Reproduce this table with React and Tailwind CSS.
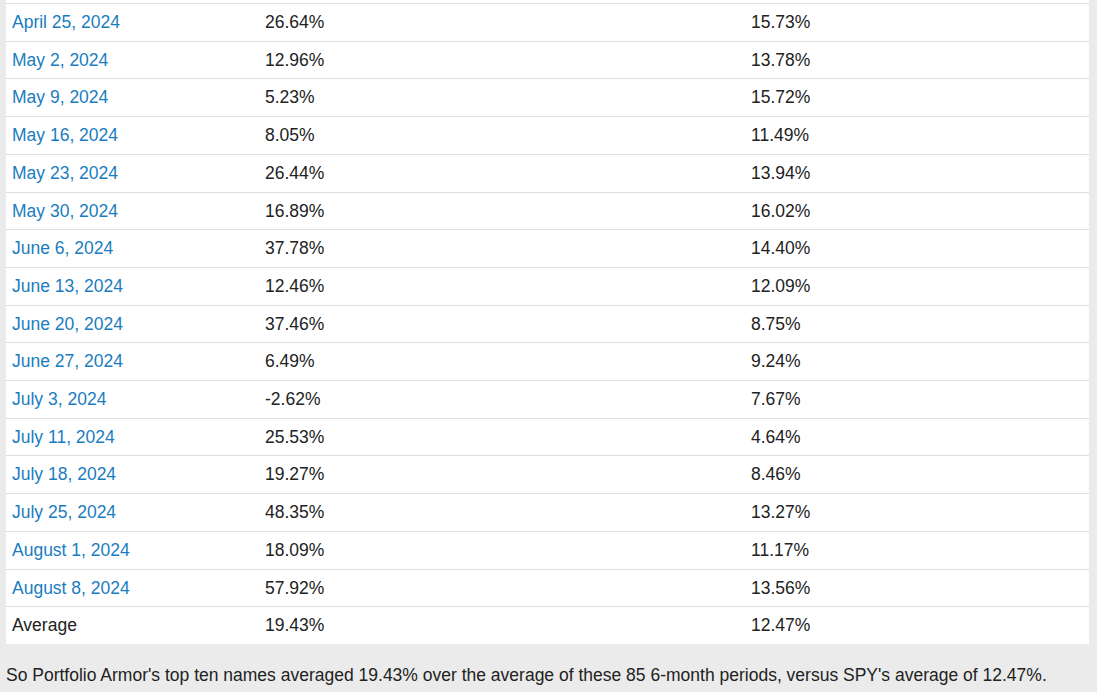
const rows = [
  ["April 25, 2024", "26.64%", "15.73%"],
  ["May 2, 2024", "12.96%", "13.78%"],
  ["May 9, 2024", "5.23%", "15.72%"],
  ["May 16, 2024", "8.05%", "11.49%"],
  ["May 23, 2024", "26.44%", "13.94%"],
  ["May 30, 2024", "16.89%", "16.02%"],
  ["June 6, 2024", "37.78%", "14.40%"],
  ["June 13, 2024", "12.46%", "12.09%"],
  ["June 20, 2024", "37.46%", "8.75%"],
  ["June 27, 2024", "6.49%", "9.24%"],
  ["July 3, 2024", "-2.62%", "7.67%"],
  ["July 11, 2024", "25.53%", "4.64%"],
  ["July 18, 2024", "19.27%", "8.46%"],
  ["July 25, 2024", "48.35%", "13.27%"],
  ["August 1, 2024", "18.09%", "11.17%"],
  ["August 8, 2024", "57.92%", "13.56%"],
];

function App() {
  return (
    <div
      className="h-[692px] overflow-hidden bg-[#ebebeb] pl-[6px] pr-[8px] text-[17.5px] text-[#222]"
      style={{ fontFamily: '"Liberation Sans", Arial, sans-serif' }}
    >
      <div className="bg-white pt-[3px]">
        <table className="w-full border-collapse">
          <colgroup>
            <col className="w-[253px]" />
            <col className="w-[486px]" />
            <col />
          </colgroup>
          <tbody>
            {rows.map(([date, top, spy]) => (
              <tr key={date} className="border-t border-[#dedede]">
                <td className="px-[6px] py-[9px] leading-[18.7px]">
                  <a href="#" className="text-[#1a7dc0] no-underline">
                    {date}
                  </a>
                </td>
                <td className="px-[6px] py-[9px] leading-[18.7px]">{top}</td>
                <td className="px-[6px] py-[9px] leading-[18.7px]">{spy}</td>
              </tr>
            ))}
            <tr className="border-t border-[#dedede]">
              <td className="px-[6px] py-[9px] leading-[18.7px]">Average</td>
              <td className="px-[6px] py-[9px] leading-[18.7px]">19.43%</td>
              <td className="px-[6px] py-[9px] leading-[18.7px]">12.47%</td>
            </tr>
          </tbody>
        </table>
      </div>
      <p className="mt-[22px] leading-[18.7px]">
        So Portfolio Armor's top ten names averaged 19.43% over the average of these 85 6-month periods, versus SPY's average of 12.47%.
      </p>
    </div>
  );
}

export default App;
